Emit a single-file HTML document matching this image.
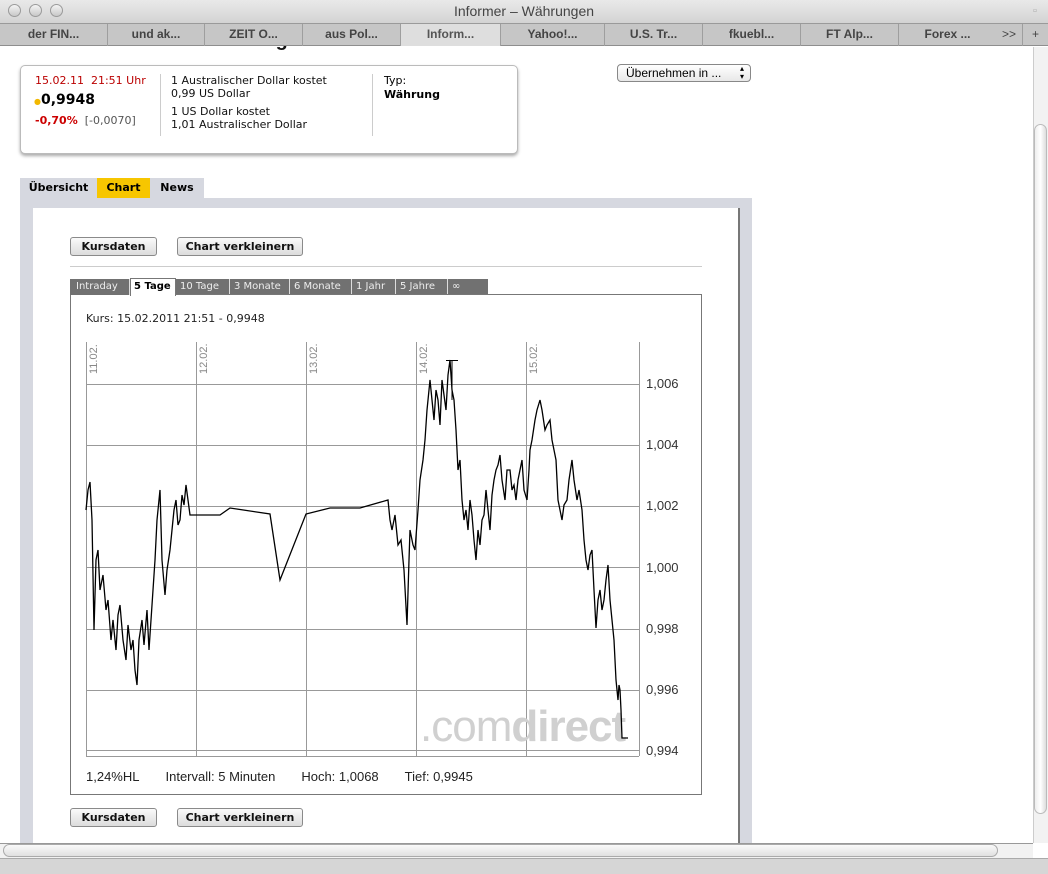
<!DOCTYPE html>
<html><head><meta charset="utf-8"><style>
*{margin:0;padding:0;box-sizing:border-box}
body{width:1048px;height:874px;overflow:hidden;background:#fff;font-family:"Liberation Sans",sans-serif;position:relative}
.abs{position:absolute}
#titlebar{left:0;top:0;width:1048px;height:24px;background:linear-gradient(#e9e9e9,#d2d2d2);text-align:center;font-size:14px;color:#444;line-height:23px}
.light{width:13px;height:13px;border-radius:50%;background:linear-gradient(#f4f4f4,#c8c8c8);border:1px solid #9a9a9a;top:4px}
#tabs{left:0;top:23px;width:1048px;height:23px;background:#c6c6c6;border-bottom:1px solid #8e8e8e;border-top:1px solid #9a9a9a}
.tab{position:absolute;top:0;height:22px;font-size:12px;font-weight:bold;color:#444;text-align:center;line-height:20px;border-left:1px solid #9e9e9e;font-family:"Liberation Sans",sans-serif}
.btn{position:absolute;height:19px;border:1px solid #8a8a8a;border-radius:3px;background:linear-gradient(#fafafa,#dcdcdc);font-size:11px;font-weight:bold;text-align:center;line-height:17px;color:#111;font-family:"DejaVu Sans",sans-serif}
.ptab{position:absolute;top:279px;height:16px;background:#717171;color:#eee;font-size:10px;line-height:15px;border-right:1px solid #ddd;padding-left:4px;font-family:"DejaVu Sans",sans-serif;white-space:nowrap;overflow:hidden}
.yl{position:absolute;left:646px;font-size:13px;color:#333}
.dl{position:absolute;font-size:11px;color:#888;transform:rotate(-90deg);transform-origin:left top}
.v{font-family:"DejaVu Sans",sans-serif}
</style></head><body>
<div class="abs" style="left:20px;top:29px;font-size:20px;font-weight:bold;color:#111;white-space:nowrap">Australischer Dollar im Vergleich zum US-Dollar <span style="display:inline-block;width:14px;height:14px;border:1px solid #333;margin-left:8px"></span> <span style="display:inline-block;width:14px;height:14px;border:1px solid #333"></span> <span style="display:inline-block;width:14px;height:14px;border:1px solid #333"></span></div>
<div id="titlebar" class="abs">Informer – Währungen</div>
<div class="abs light" style="left:8px"></div><div class="abs light" style="left:29px"></div><div class="abs light" style="left:50px"></div>
<div class="abs" style="left:1033px;top:5px;font-size:11px;color:#aaa">▫</div>
<div id="tabs" class="abs">
<div class="tab" style="left:0;width:107px;border:none">der FIN...</div>
<div class="tab" style="left:107px;width:97px">und ak...</div>
<div class="tab" style="left:204px;width:98px">ZEIT O...</div>
<div class="tab" style="left:302px;width:98px">aus Pol...</div>
<div class="tab" style="left:400px;width:100px;background:#dedede;color:#555">Inform...</div>
<div class="tab" style="left:500px;width:104px">Yahoo!...</div>
<div class="tab" style="left:604px;width:98px">U.S. Tr...</div>
<div class="tab" style="left:702px;width:98px">fkuebl...</div>
<div class="tab" style="left:800px;width:98px">FT Alp...</div>
<div class="tab" style="left:898px;width:98px">Forex ...</div>
<div class="tab" style="left:996px;width:26px;font-weight:normal;border:none">&gt;&gt;</div>
<div class="tab" style="left:1022px;width:26px;font-weight:normal">+</div>
</div>

<div class="abs" style="left:20px;top:65px;width:498px;height:89px;border:1px solid #bbb;border-radius:5px;box-shadow:0 2px 3px #aaa;background:#fff"></div>
<div class="abs v" style="left:35px;top:74px;font-size:11px;color:#b00">15.02.11&nbsp; 21:51 Uhr</div>
<div class="abs v" style="left:34px;top:92px;font-size:14px;font-weight:bold"><span style="color:#f2b800;font-size:8px">●</span>0,9948</div>
<div class="abs v" style="left:35px;top:114px;font-size:11px"><b style="color:#c00">-0,70%</b> <span style="color:#555">&nbsp;[-0,0070]</span></div>
<div class="abs" style="left:160px;top:74px;width:1px;height:62px;background:#ccc"></div>
<div class="abs v" style="left:171px;top:74px;font-size:11px;line-height:13px;color:#111">1 Australischer Dollar kostet<br>0,99 US Dollar<div style="height:5px"></div>1 US Dollar kostet<br>1,01 Australischer Dollar</div>
<div class="abs" style="left:372px;top:74px;width:1px;height:62px;background:#ccc"></div>
<div class="abs v" style="left:384px;top:74px;font-size:11px;line-height:14px">Typ:<br><b>Währung</b></div>
<div class="abs" style="left:617px;top:64px;width:134px;height:18px;border:1px solid #888;border-radius:4px;background:linear-gradient(#fff,#e8e8e8);font-size:12px;line-height:16px;padding-left:8px">Übernehmen in ...<span style="position:absolute;right:6px;top:0;font-size:8px;line-height:8px">▴<br>▾</span></div>

<div class="abs v" style="left:20px;top:178px;width:77px;height:20px;background:#d6d8e0;font-size:11px;font-weight:bold;line-height:20px;text-align:center">Übersicht</div>
<div class="abs v" style="left:97px;top:178px;width:53px;height:20px;background:#f7c600;font-size:11px;font-weight:bold;line-height:20px;text-align:center">Chart</div>
<div class="abs v" style="left:150px;top:178px;width:54px;height:20px;background:#d6d8e0;font-size:11px;font-weight:bold;line-height:20px;text-align:center">News</div>
<div class="abs" style="left:20px;top:198px;width:732px;height:646px;background:#d6d8e0"></div>
<div class="abs" style="left:33px;top:208px;width:707px;height:636px;background:#fff;border-right:2px solid #777"></div>

<div class="btn" style="left:70px;top:237px;width:87px">Kursdaten</div>
<div class="btn" style="left:177px;top:237px;width:126px">Chart verkleinern</div>
<div class="abs" style="left:70px;top:266px;width:632px;height:1px;background:#ccc"></div>
<div class="abs" style="left:70px;top:279px;width:418px;height:16px;background:#717171"></div>
<div class="ptab" style="left:72px;width:58px">Intraday</div>
<div class="ptab" style="left:130px;top:278px;height:18px;width:46px;background:#fff;color:#000;font-weight:bold;border:1px solid #777;border-bottom:none;padding-left:3px">5 Tage</div>
<div class="ptab" style="left:176px;width:54px">10 Tage</div>
<div class="ptab" style="left:230px;width:60px">3 Monate</div>
<div class="ptab" style="left:290px;width:62px">6 Monate</div>
<div class="ptab" style="left:352px;width:44px">1 Jahr</div>
<div class="ptab" style="left:396px;width:52px">5 Jahre</div>
<div class="ptab" style="left:448px;width:40px;border:none">∞</div>
<div class="abs" style="left:70px;top:295px;width:632px;height:500px;border:1px solid #777;border-top:none"></div>
<div class="abs" style="left:176px;top:294px;width:526px;height:1px;background:#777"></div>
<div class="abs v" style="left:86px;top:312px;font-size:11px;color:#222">Kurs: 15.02.2011 21:51 - 0,9948</div>

<svg class="abs" style="left:0;top:0" width="1048" height="874">
<g stroke="#999" stroke-width="1" fill="none">
<path d="M86.5 342V756M196.5 342V756M306.5 342V756M416.5 342V756M526.5 342V756M639.5 342V756"/>
<path d="M86 384.5H639M86 445.5H639M86 506.5H639M86 567.5H639M86 629.5H639M86 690.5H639M86 750.5H639M86 756.5H639"/>
</g>
<text x="420" y="741" font-family="Liberation Sans,sans-serif" font-size="44" fill="#d0d0d0" letter-spacing="-1">.com<tspan font-weight="bold">direct</tspan></text>
<polyline fill="none" stroke="#000" stroke-width="1.3" points="86,510 88,490 90,482 92,520 94,630 96,560 98,550 100,590 103,575 106,610 108,600 111,640 113,620 116,650 118,615 120,605 123,640 126,660 128,625 131,650 133,640 135,670 137,685 139,640 142,620 144,645 147,610 149,650 151,620 153,590 155,560 157,520 159,500 160,490 162,560 165,595 167,570 170,550 172,530 174,510 176,500 178,525 180,520 182,495 184,505 186,485 188,500 190,515 196,515 220,515 230,508 270,514 280,580 306,514 330,508 360,508 388,500 390,520 392,530 395,515 398,545 401,540 404,570 407,625 409,560 410,530 413,545 415,550 418,510 420,480 423,460 425,440 427,410 430,380 432,400 434,420 436,390 438,400 440,425 442,380 444,395 446,410 448,375 450,360 452,390 454,400 456,430 458,470 460,460 462,500 464,520 466,510 468,530 470,500 472,515 474,540 476,560 478,530 480,545 482,520 484,515 486,490 488,510 490,530 492,495 494,480 496,470 498,465 500,455 502,480 505,500 507,470 510,470 512,490 514,485 516,500 518,480 520,470 522,460 524,490 527,500 529,470 530,450 532,440 535,420 537,410 540,400 542,410 545,430 547,425 550,420 552,440 554,450 556,460 558,500 560,510 562,520 564,505 567,500 569,480 572,460 574,480 577,500 579,490 582,510 584,540 586,560 588,570 590,555 592,550 594,590 596,628 598,600 600,590 602,610 604,600 606,580 608,565 610,600 612,620 614,640 616,680 617,690 618,700 619,685 620,690 621,710 622,738 628,738"/>
<path d="M446 360.5H458M452 360V400" stroke="#000"/>
</svg>
<div class="yl" style="top:376px">1,006</div>
<div class="yl" style="top:437px">1,004</div>
<div class="yl" style="top:498px">1,002</div>
<div class="yl" style="top:560px">1,000</div>
<div class="yl" style="top:621px">0,998</div>
<div class="yl" style="top:682px">0,996</div>
<div class="yl" style="top:743px">0,994</div>
<div class="dl" style="left:88px;top:374px">11.02.</div>
<div class="dl" style="left:198px;top:374px">12.02.</div>
<div class="dl" style="left:308px;top:374px">13.02.</div>
<div class="dl" style="left:418px;top:374px">14.02.</div>
<div class="dl" style="left:528px;top:374px">15.02.</div>
<div class="abs" style="left:86px;top:769px;font-size:13px;color:#222;white-space:nowrap">1,24%HL<span style="margin-left:26px">Intervall: 5 Minuten</span><span style="margin-left:26px">Hoch: 1,0068</span><span style="margin-left:26px">Tief: 0,9945</span></div>

<div class="btn" style="left:70px;top:808px;width:87px">Kursdaten</div>
<div class="btn" style="left:177px;top:808px;width:126px">Chart verkleinern</div>

<div class="abs" style="left:1033px;top:47px;width:15px;height:796px;background:#f2f2f2;border-left:1px solid #ccc"></div>
<div class="abs" style="left:1034px;top:124px;width:13px;height:690px;border:1px solid #bbb;border-radius:7px;background:linear-gradient(90deg,#eee,#fff,#ddd)"></div>
<div class="abs" style="left:0;top:843px;width:1033px;height:15px;background:#f2f2f2;border-top:1px solid #999"></div>
<div class="abs" style="left:3px;top:844px;width:995px;height:13px;border:1px solid #aaa;border-radius:7px;background:linear-gradient(#fafafa,#e0e0e0)"></div>
<div class="abs" style="left:0;top:858px;width:1048px;height:16px;background:#d6d6d6;border-top:1px solid #aaa"></div>
</body></html>
